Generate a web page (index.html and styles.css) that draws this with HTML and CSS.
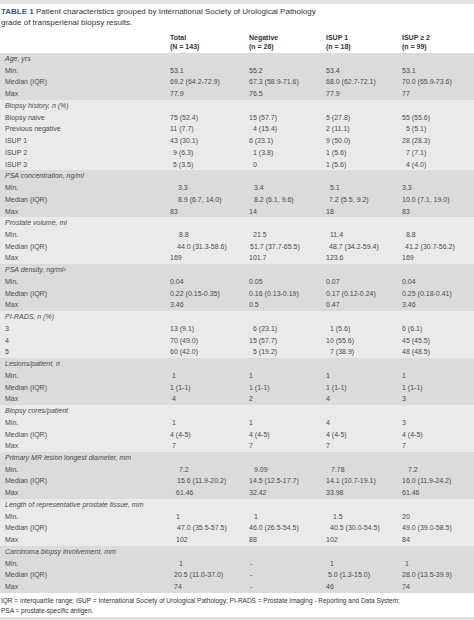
FILE: index.html
```html
<!DOCTYPE html>
<html>
<head>
<meta charset="utf-8">
<link rel="stylesheet" href="styles.css">
</head>
<body>
<div class="bar"></div>
<div class="caption"><b class="tl">TABLE 1</b> Patient characteristics grouped by International Society of Urological Pathology<br>grade of transperienal biopsy results.</div>
<table class="t">
<colgroup><col class="c0"><col class="c1"><col class="c2"><col class="c3"><col class="c4"></colgroup>
<thead>
<tr class="h1"><th></th><th>Total</th><th>Negative</th><th>ISUP 1</th><th>ISUP ≥ 2</th></tr>
<tr class="h2"><th></th><th>(N = 143)</th><th>(n = 26)</th><th>(n = 18)</th><th>(n = 99)</th></tr>
</thead>
<tbody class="dk">
<tr><td class="sec" colspan="5">Age, yrs</td></tr>
<tr><td>Min.</td><td>53.1</td><td>55.2</td><td>53.4</td><td>53.1</td></tr>
<tr><td>Median (IQR)</td><td>69.2 (64.2-72.9)</td><td>67.3 (58.9-71.6)</td><td>68.0 (62.7-72.1)</td><td>70.0 (65.9-73.6)</td></tr>
<tr><td>Max</td><td>77.9</td><td>76.5</td><td>77.9</td><td>77</td></tr>
</tbody>
<tbody class="lt">
<tr><td class="sec" colspan="5">Biopsy history, n (%)</td></tr>
<tr><td>Biopsy naive</td><td>75 (52.4)</td><td>15 (57.7)</td><td>5 (27.8)</td><td>55 (55.6)</td></tr>
<tr><td>Previous negative</td><td>11 (7.7)</td><td class="o4">4 (15.4)</td><td>2 (11.1)</td><td class="o4">5 (5.1)</td></tr>
<tr><td>ISUP 1</td><td>43 (30.1)</td><td>6 (23.1)</td><td>9 (50.0)</td><td>28 (28.3)</td></tr>
<tr><td>ISUP 2</td><td class="o3">9 (6.3)</td><td class="o4">1 (3.8)</td><td>1 (5.6)</td><td class="o4">7 (7.1)</td></tr>
<tr><td>ISUP 3</td><td class="o3">5 (3.5)</td><td class="o4">0</td><td>1 (5.6)</td><td class="o4">4 (4.0)</td></tr>
</tbody>
<tbody class="dk">
<tr><td class="sec" colspan="5">PSA concentration, ng/ml</td></tr>
<tr><td>Min.</td><td class="o8">3.3</td><td class="o5">3.4</td><td class="o4">5.1</td><td>3.3</td></tr>
<tr><td>Median (IQR)</td><td class="o8">8.9 (6.7, 14.0)</td><td class="o5">8.2 (6.1, 9.6)</td><td class="o3">7.2 (5.5, 9.2)</td><td>10.0 (7.1, 19.0)</td></tr>
<tr><td>Max</td><td>83</td><td>14</td><td>18</td><td>83</td></tr>
</tbody>
<tbody class="lt">
<tr><td class="sec" colspan="5">Prostate volume, ml</td></tr>
<tr><td>Min.</td><td class="o9">8.8</td><td class="o4">21.5</td><td class="o4">11.4</td><td class="o4">8.8</td></tr>
<tr><td>Median (IQR)</td><td class="o7">44.0 (31.3-58.6)</td><td class="o1">51.7 (37.7-65.5)</td><td class="o3">48.7 (34.2-59.4)</td><td class="o3">41.2 (30.7-56.2)</td></tr>
<tr><td>Max</td><td>169</td><td>101.7</td><td>123.6</td><td>169</td></tr>
</tbody>
<tbody class="dk">
<tr><td class="sec" colspan="5">PSA density, ng/ml²</td></tr>
<tr><td>Min.</td><td>0.04</td><td>0.05</td><td>0.07</td><td>0.04</td></tr>
<tr><td>Median (IQR)</td><td>0.22 (0.15-0.35)</td><td>0.16 (0.13-0.19)</td><td>0.17 (0.12-0.24)</td><td>0.25 (0.18-0.41)</td></tr>
<tr><td>Max</td><td>3.46</td><td>0.5</td><td>0.47</td><td>3.46</td></tr>
</tbody>
<tbody class="lt">
<tr><td class="sec" colspan="5">PI-RADS, n (%)</td></tr>
<tr><td>3</td><td>13 (9.1)</td><td class="o4">6 (23.1)</td><td class="o4">1 (5.6)</td><td>6 (6.1)</td></tr>
<tr><td>4</td><td>70 (49.0)</td><td>15 (57.7)</td><td>10 (55.6)</td><td>45 (45.5)</td></tr>
<tr><td>5</td><td>60 (42.0)</td><td class="o4">5 (19.2)</td><td class="o4">7 (38.9)</td><td>48 (48.5)</td></tr>
</tbody>
<tbody class="dk">
<tr><td class="sec" colspan="5">Lesions/patient, n</td></tr>
<tr><td>Min.</td><td class="o2">1</td><td>1</td><td>1</td><td>1</td></tr>
<tr><td>Median (IQR)</td><td>1 (1-1)</td><td>1 (1-1)</td><td>1 (1-1)</td><td>1 (1-1)</td></tr>
<tr><td>Max</td><td class="o2">4</td><td>2</td><td>4</td><td>3</td></tr>
</tbody>
<tbody class="lt">
<tr><td class="sec" colspan="5">Biopsy cores/patient</td></tr>
<tr><td>Min.</td><td class="o2">1</td><td>1</td><td>4</td><td>3</td></tr>
<tr><td>Median (IQR)</td><td>4 (4-5)</td><td>4 (4-5)</td><td>4 (4-5)</td><td>4 (4-5)</td></tr>
<tr><td>Max</td><td class="o2">7</td><td>7</td><td>7</td><td>7</td></tr>
</tbody>
<tbody class="dk">
<tr><td class="sec" colspan="5">Primary MR lesion longest diameter, mm</td></tr>
<tr><td>Min.</td><td class="o9">7.2</td><td class="o5">9.09</td><td class="o5">7.78</td><td class="o6">7.2</td></tr>
<tr><td>Median (IQR)</td><td class="o7">15.6 (11.9-20.2)</td><td>14.5 (12.5-17.7)</td><td>14.1 (10.7-19.1)</td><td>16.0 (11.9-24.2)</td></tr>
<tr><td>Max</td><td class="o6">61.46</td><td>32.42</td><td>33.98</td><td>61.46</td></tr>
</tbody>
<tbody class="lt">
<tr><td class="sec" colspan="5">Length of representative prostate tissue, mm</td></tr>
<tr><td>Min.</td><td class="o6">1</td><td class="o5">1</td><td class="o7">1.5</td><td>20</td></tr>
<tr><td>Median (IQR)</td><td class="o7">47.0 (35.5-57.5)</td><td>46.0 (26.5-54.5)</td><td class="o4">40.5 (30.0-54.5)</td><td>49.0 (39.0-58.5)</td></tr>
<tr><td>Max</td><td class="o6">102</td><td>88</td><td>102</td><td>84</td></tr>
</tbody>
<tbody class="dk">
<tr><td class="sec" colspan="5">Carcinoma biopsy involvement, mm</td></tr>
<tr><td>Min.</td><td class="o9">1</td><td class="o1">-</td><td class="o4">1</td><td class="o3">1</td></tr>
<tr><td>Median (IQR)</td><td class="o4">20.5 (11.0-37.0)</td><td class="o1">-</td><td class="o2">5.0 (1.3-15.0)</td><td>28.0 (13.5-39.9)</td></tr>
<tr><td>Max</td><td class="o4">74</td><td class="o1">-</td><td>46</td><td>74</td></tr>
</tbody>
</table>
<div class="foot">IQR = interquartile range; ISUP = International Society of Urological Pathology; PI-RADS = Prostate Imaging - Reporting and Data System;<br>PSA = prostate-specific antigen.</div>
<div class="bar bot"></div>
</body>
</html>
```

FILE: styles.css
```css
html, body {
  margin: 0;
  padding: 0;
  background: #ffffff;
}
body {
  width: 474px;
  height: 620px;
  overflow: hidden;
  font-family: "Liberation Sans", Arial, sans-serif;
  color: #4a4a4a;
}
.bar {
  height: 4px;
  background: #e2e2e2;
}
.bar.bot {
  height: 3px;
}
.caption {
  font-size: 8px;
  line-height: 11px;
  padding-top: 2px;
  height: 22px;
  color: #333333;
  padding-left: 1px;
}
.tl {
  color: #2f5e8e;
  font-weight: bold;
}
.t {
  border-collapse: collapse;
  table-layout: fixed;
  width: 474px;
  font-size: 7px;
}
.c0 { width: 170px; }
.c1 { width: 79px; }
.c2 { width: 77px; }
.c3 { width: 76px; }
.c4 { width: 72px; }
.t th {
  text-align: left;
  font-weight: bold;
  color: #333333;
  padding: 0;
  line-height: 9px;
}
.t .h1 th {
  padding-top: 5px;
}
.t .h2 th {
  padding-bottom: 2px;
}
.t td {
  padding: 0;
  height: 11.73px;
  line-height: 11.73px;
  white-space: nowrap;
}
.t td:first-child {
  padding-left: 5px;
}
.t td.sec {
  font-style: italic;
}
.dk { background: #dbdbdb; }
.lt { background: #eaeaea; }
.o1 { padding-left: 1px !important; }
.o2 { padding-left: 2px !important; }
.o3 { padding-left: 3px !important; }
.o4 { padding-left: 4px !important; }
.o5 { padding-left: 5px !important; }
.o6 { padding-left: 6px !important; }
.o7 { padding-left: 7px !important; }
.o8 { padding-left: 8px !important; }
.o9 { padding-left: 9px !important; }
.foot {
  font-size: 6.5px;
  line-height: 10px;
  padding-top: 3px;
  height: 21px;
  color: #333333;
  padding-left: 1px;
}
```
